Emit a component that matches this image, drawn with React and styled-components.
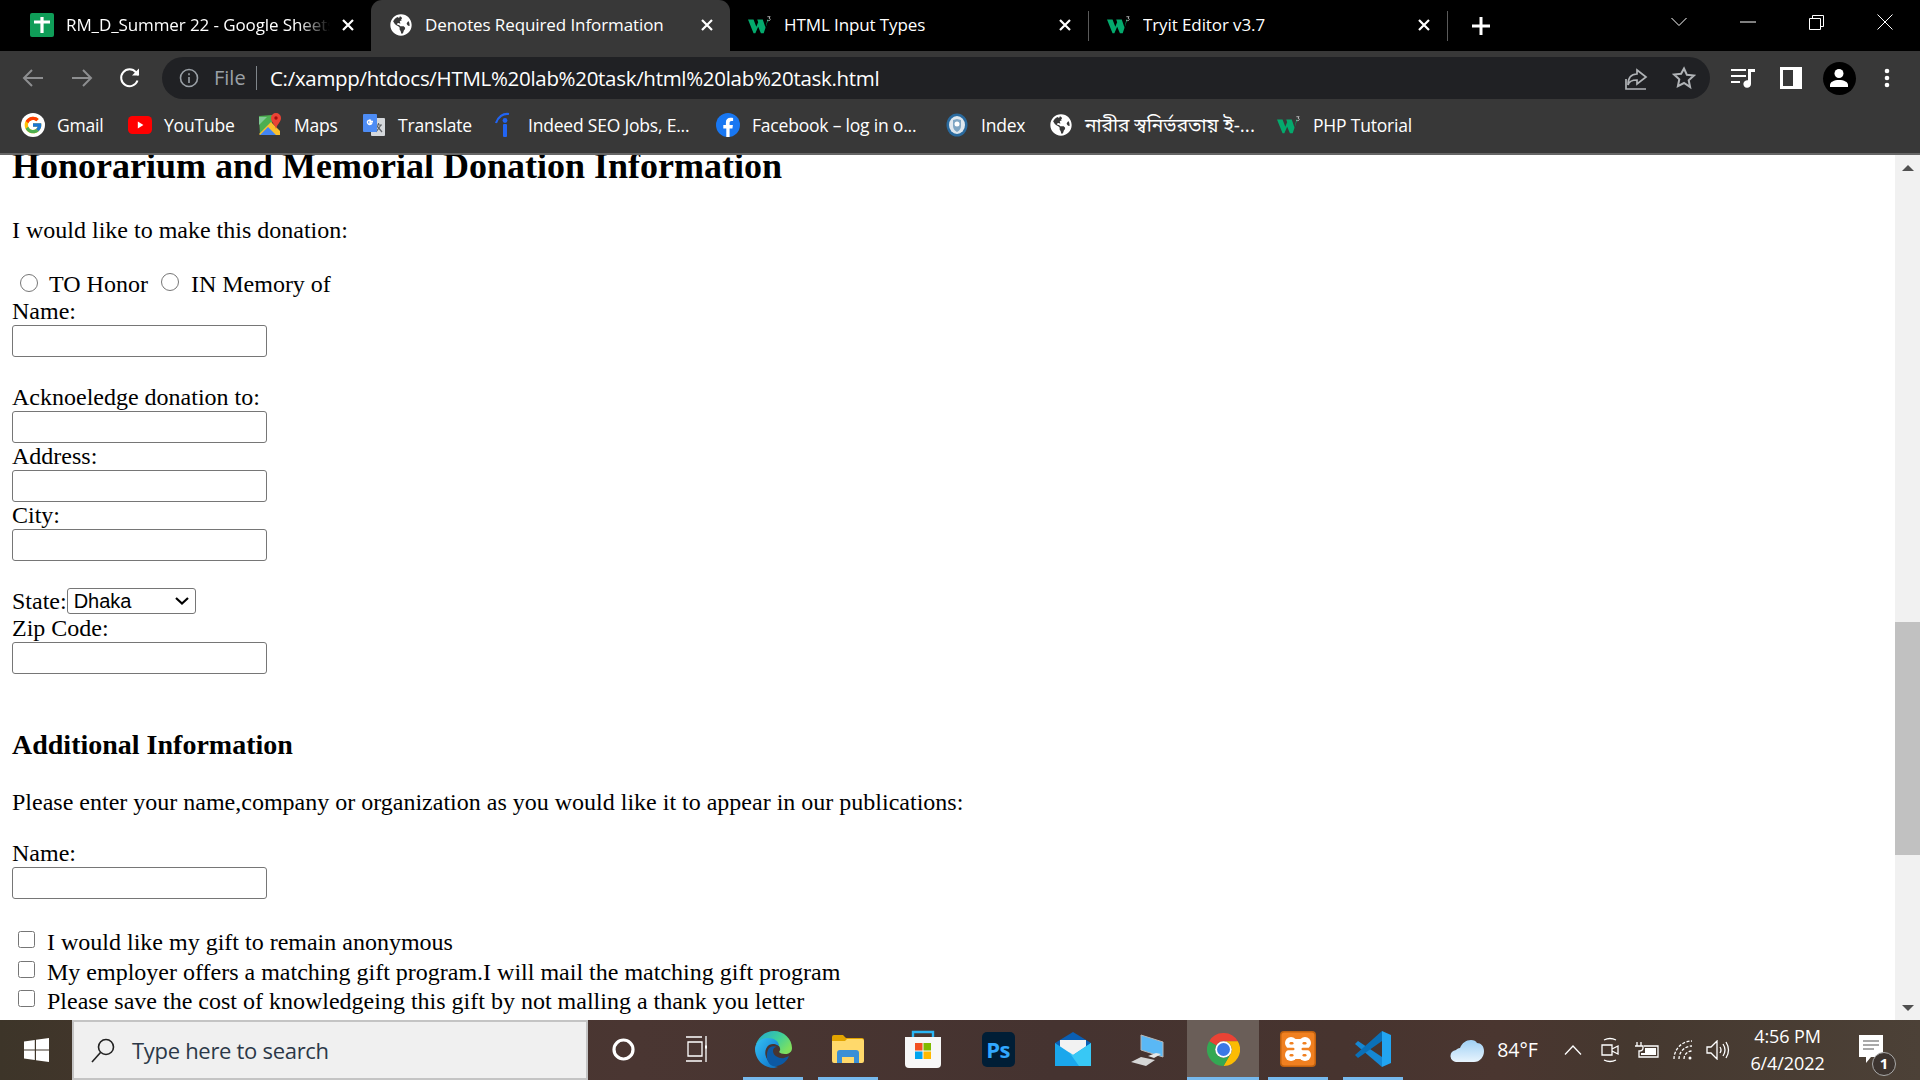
import React from "react";
import styled, { createGlobalStyle, css } from "styled-components";
import { FcGoogle } from "react-icons/fc";
import { FaGlobeAmericas } from "react-icons/fa";

const Global = createGlobalStyle`
  html, body { margin: 0; padding: 0; height: 100%; overflow: hidden; background: #fff; }
  #root { height: 100%; }
  * { box-sizing: border-box; }
`;

const UI = `"Open Sans", "Noto Sans", "Noto Sans Bengali", sans-serif`;

const Screen = styled.div`
  width: 1920px;
  height: 1080px;
  display: flex;
  flex-direction: column;
  overflow: hidden;
`;

/* ---------- browser chrome ---------- */
const TabStrip = styled.div`
  height: 51px;
  background: #000;
  display: flex;
  padding-left: 12px;
  flex: none;
`;
const Tab = styled.div`
  width: 359px;
  height: 51px;
  display: flex;
  align-items: center;
  padding: 0 ${p => p.$divider ? 18 : 17}px 2px 18px;
  color: #fff;
  font: 400 17px/22px ${UI};
  position: relative;
  ${p => p.$active && css`
    background: #383838;
    border-radius: 11px 11px 0 0;
  `}
  ${p => p.$divider && css`
    &::after {
      content: "";
      position: absolute;
      right: 0;
      top: 11px;
      height: 30px;
      width: 1px;
      background: #5a5a5a;
    }
  `}
`;
const TabFav = styled.span`
  width: 24px;
  height: 24px;
  flex: none;
  display: flex;
  align-items: center;
  justify-content: center;
  margin-right: 12px;
`;
const TabTitle = styled.span`
  flex: 1;
  white-space: nowrap;
  overflow: hidden;
  letter-spacing: -.1px;
  ${p => p.$fade && css`
    -webkit-mask-image: linear-gradient(to right, #000 88%, transparent 100%);
    mask-image: linear-gradient(to right, #000 88%, transparent 100%);
    margin-right: 12px;
  `}
`;
const TabClose = styled.svg`
  width: 12px;
  height: 12px;
  flex: none;
  stroke: #fff;
  stroke-width: 2.2;
`;
const NewTab = styled.svg`
  width: 20px;
  height: 20px;
  margin: 16px 0 0 23px;
  stroke: #fff;
  stroke-width: 3;
  flex: none;
`;
const WindowControls = styled.div`
  margin-left: auto;
  margin-right: 1px;
  display: flex;
  align-items: flex-start;
`;
const WinBtn = styled.div`
  width: 68.5px;
  height: 44px;
  display: flex;
  align-items: center;
  justify-content: center;
  svg { stroke: #fff; fill: none; stroke-width: 1; }
`;

const Toolbar = styled.div`
  height: 48px;
  background: #383838;
  display: flex;
  align-items: flex-start;
  flex: none;
  padding-top: 6px;
`;
const NavBtn = styled.div`
  width: 48.5px;
  height: 42px;
  display: flex;
  align-items: center;
  justify-content: center;
  svg { fill: none; stroke: ${p => p.$dim ? "#8d8e90" : "#fff"}; stroke-width: 2; }
`;
const NavGroup = styled.div`
  display: flex;
  padding-left: 9px;
  width: 162px;
`;
const Omnibox = styled.div`
  width: 1548px;
  height: 42px;
  background: #202124;
  border-radius: 21px;
  display: flex;
  align-items: center;
  padding: 0 14px 0 17px;
  color: #fff;
`;
const InfoIcon = styled.svg`
  width: 20px;
  height: 20px;
  fill: none;
  stroke: #9aa0a6;
  stroke-width: 1.6;
  flex: none;
`;
const Scheme = styled.span`
  font: 400 20px/24px ${UI};
  color: #9aa0a6;
  margin-left: 15px;
  width: 42px;
  flex: none;
`;
const OmniDivider = styled.span`
  width: 1px;
  height: 24px;
  background: #80868b;
  margin-right: 13px;
  flex: none;
`;
const Url = styled.span`
  font: 400 20.5px/24px ${UI};
  letter-spacing: -.3px;
  white-space: nowrap;
  flex: 1;
`;
const OmniIcon = styled.svg`
  width: 24px;
  height: 24px;
  fill: none;
  stroke: #b0b3b6;
  stroke-width: 1.7;
  margin-left: ${p => p.$gap || 0}px;
  flex: none;
`;
const ToolIcons = styled.div`
  display: flex;
  align-items: center;
  height: 42px;
  flex: 1;
  padding-left: 9px;
`;
const ToolCell = styled.div`
  width: 48px;
  height: 42px;
  display: flex;
  align-items: center;
  justify-content: center;
`;
const Avatar = styled.div`
  width: 33px;
  height: 33px;
  border-radius: 50%;
  background: #000;
  display: flex;
  align-items: center;
  justify-content: center;
`;

const BookmarkBar = styled.div`
  height: 56px;
  background: #383838;
  border-bottom: 2px solid #666;
  display: flex;
  align-items: center;
  flex: none;
  padding: 0 0 3px 21px;
`;
const Bookmark = styled.div`
  width: ${p => p.$w}px;
  display: flex;
  align-items: center;
  color: #fff;
  font: 400 17.5px/22px ${UI};
  letter-spacing: -.2px;
  white-space: nowrap;
`;
const BengaliName = styled.span`
  font-size: 19.1px;
  letter-spacing: 0;
`;
const BmIcon = styled.span`
  width: 24px;
  height: 24px;
  flex: none;
  margin-right: 12px;
  display: flex;
  align-items: center;
  justify-content: center;
`;
const GlobeWrap = styled.span`
  display: flex;
  width: 22px;
  height: 22px;
  border-radius: 50%;
`;
const GoogleWrap = styled.span`
  width: 24px;
  height: 24px;
  border-radius: 12px;
  background: #fff;
  display: flex;
  align-items: center;
  justify-content: center;
`;

/* ---------- page ---------- */
const Viewport = styled.div`
  height: 865px;
  display: flex;
  flex: none;
  overflow: hidden;
`;
const Content = styled.main`
  flex: 1;
  min-width: 0;
  background: #fff;
  color: #000;
  font: 400 24px/27px "Liberation Serif", "Times New Roman", serif;
  padding-left: 12px;
  overflow: hidden;
`;
const Title = styled.h2`
  font-size: 36px;
  line-height: 41px;
  font-weight: 700;
  margin: -9px 0 30px;
`;
const Subtitle = styled.h3`
  font-size: 28px;
  line-height: 32px;
  font-weight: 700;
  margin: 55px 0 28px;
`;
const Para = styled.p`
  margin: 0 0 ${p => p.$mb || 0}px;
`;
const RadioRow = styled.div`
  display: flex;
  align-items: center;
  height: 28px;
`;
const Radio = styled.input.attrs({ type: "radio" })`
  width: 18px;
  height: 18px;
  margin: ${p => p.$first ? "-3px 11px 0 8px" : "-4px 12px 0 13px"};
  flex: none;
`;
const Label = styled.label`
  display: block;
  margin: ${p => p.$mt || 0}px 0 3px;
  height: 24px;
  line-height: 27px;
`;
const TextInput = styled.input.attrs({ type: "text" })`
  display: block;
  width: 255px;
  height: 32px;
  margin: 0;
  padding: 1px 2px;
  background: #fff;
  border: 1px solid #767676;
  border-radius: 3px;
`;
const StateRow = styled.div`
  display: flex;
  align-items: center;
  height: 26px;
  line-height: 24px;
  margin-top: ${p => p.$mt || 0}px;
`;
const SelectWrap = styled.span`
  position: relative;
  display: block;
  width: 129px;
  height: 26px;
  svg {
    position: absolute;
    right: 7px;
    top: 9px;
    pointer-events: none;
    fill: none;
    stroke: #000;
    stroke-width: 2.2;
  }
`;
const Select = styled.select`
  appearance: none;
  display: block;
  width: 100%;
  height: 26px;
  margin: 0;
  padding: 0 0 0 6px;
  font: 400 20px "Liberation Sans", Arial, sans-serif;
  background: #fff;
  color: #000;
  border: 1px solid #767676;
  border-radius: 3px;
`;
const CheckGroup = styled.div`
  margin-top: 29px;
`;
const CheckRow = styled.div`
  display: flex;
  align-items: center;
  height: 29.5px;
  white-space: nowrap;
`;
const Check = styled.input.attrs({ type: "checkbox" })`
  width: 17px;
  height: 17px;
  margin: -6px 12px 0 6px;
  flex: none;
`;

/* ---------- scrollbar ---------- */
const ScrollBar = styled.div`
  width: 25px;
  flex: none;
  background: #f1f1f1;
  display: flex;
  flex-direction: column;
  justify-content: space-between;
  position: relative;
`;
const ArrowBtn = styled.div`
  height: 25px;
  display: flex;
  align-items: center;
  justify-content: center;
  &::before {
    content: "";
    width: 0;
    height: 0;
    border-left: 6px solid transparent;
    border-right: 6px solid transparent;
    ${p => p.$down ? "border-top: 6px solid #505050;" : "border-bottom: 6px solid #505050;"}
  }
`;
const Thumb = styled.div`
  position: absolute;
  left: 0;
  right: 0;
  top: 467px;
  height: 233px;
  background: #c1c1c1;
`;

/* ---------- taskbar ---------- */
const Taskbar = styled.footer`
  height: 60px;
  flex: none;
  display: flex;
  align-items: stretch;
  background: linear-gradient(90deg, #3d3529 0%, #44362c 8%, #4a3632 33%, #453330 55%, #47342f 70%, #4a3630 78%, #45382f 85%, #4c4137 100%);
`;
const StartBtn = styled.div`
  width: 72px;
  display: flex;
  align-items: center;
  justify-content: center;
`;
const SearchBox = styled.div`
  width: 516px;
  background: #f0f0f0;
  border: 2px solid #c4c4c4;
  display: flex;
  align-items: center;
  padding-left: 16px;
  color: #2b3848;
  font: 400 22px/26px ${UI};
  letter-spacing: -.3px;
`;
const SearchIcon = styled.svg`
  width: 26px;
  height: 26px;
  fill: none;
  stroke: #222;
  stroke-width: 1.6;
  margin-right: 16px;
  flex: none;
`;
const Slots = styled.div`
  display: flex;
  gap: 3px;
  margin-left: -1px;
`;
const Slot = styled.div`
  width: 72px;
  display: flex;
  align-items: center;
  justify-content: center;
  position: relative;
  background: ${p => p.$active ? "#6a5e58" : "transparent"};
  padding-bottom: 2px;
  ${p => (p.$running || p.$active) && css`
    &::after {
      content: "";
      position: absolute;
      bottom: 0;
      height: 3px;
      left: ${p.$active ? "0" : "6px"};
      right: ${p.$active ? "0" : "6px"};
      background: #76b9ed;
    }
  `}
`;
const PsTile = styled.div`
  width: 33px;
  height: 35px;
  border-radius: 5px;
  background: #001e36;
  color: #31a8ff;
  font: 700 22px/35px ${UI};
  text-align: center;
  letter-spacing: -.5px;
`;
const Tray = styled.div`
  flex: 1;
  display: flex;
  align-items: center;
  padding-left: 35px;
  color: #fff;
  position: relative;
`;
const TrayCell = styled.div`
  width: ${p => p.$w}px;
  margin-right: ${p => p.$mr || 0}px;
  height: 60px;
  display: flex;
  align-items: center;
  justify-content: center;
  flex: none;
  font: 400 19.5px/24px ${UI};
  svg.line { fill: none; stroke: #fff; stroke-width: 1.3; }
`;
const Clock = styled.div`
  width: 103px;
  text-align: center;
  font: 400 18px/27px ${UI};
  color: #fff;
  flex: none;
  letter-spacing: -.1px;
`;
const Badge = styled.span`
  position: absolute;
  right: 9px;
  bottom: 4px;
  width: 24px;
  height: 24px;
  border-radius: 50%;
  border: 1.5px solid #aaa;
  background: #3d342f;
  color: #fff;
  font: 700 15px/21px ${UI};
  text-align: center;
`;
const NotifyCell = styled.div`
  width: 66px;
  height: 60px;
  position: relative;
  display: flex;
  align-items: center;
  justify-content: center;
  flex: none;
`;

/* ---------- logos ---------- */
const X = () => (
  <TabClose viewBox="0 0 12 12"><path d="M1 1l10 10M11 1L1 11" /></TabClose>
);
const Sheets = () => (
  <svg width="24" height="24" viewBox="0 0 24 24">
    <rect width="24" height="24" rx="2" fill="#0f9d58" />
    <path d="M4 9h16M12 4v16" stroke="#fff" strokeWidth="3.2" fill="none" />
  </svg>
);
const W3 = () => (
  <svg width="26" height="22" viewBox="0 0 26 22">
    <path d="M0 5h6l3 8 2-5-1-3h6l3 9 2-9h1l-5 15h-3l-3-7-3 7H6z" fill="#04aa6d" />
    <path d="M21 2h3l-1.300 1.600c1 .2 1.400.7 1.400 1.300 0 .9-.8 1.400-1.800 1.400-.6 0-1-.1-1.300-.3" stroke="#ddd" strokeWidth=".8" fill="none" />
  </svg>
);
const Globe = () => (
  <GlobeWrap><FaGlobeAmericas size={22} color="#fff" /></GlobeWrap>
);
const Google = () => (
  <GoogleWrap><FcGoogle size={20} /></GoogleWrap>
);
const YouTube = () => (
  <svg width="24" height="18" viewBox="0 0 24 18">
    <rect width="24" height="18" rx="4.500" fill="#f00" />
    <path d="M9.800 5.600v6.800L15.400 9z" fill="#fff" />
  </svg>
);
const Maps = () => (
  <svg width="24" height="24" viewBox="0 0 24 24">
    <path d="M1 3l13-1v20H2z" fill="#4caf50" />
    <path d="M1 21L13 9l9 9v4H2z" fill="#fbc02d" />
    <path d="M2 22l8-8 8 8z" fill="#4285f4" />
    <path d="M1 4h8l-8 8z" fill="#81c995" />
    <path d="M18 0a5 5 0 0 1 5 5c0 4-4 6-5 11-1-5-5-7-5-11a5 5 0 0 1 5-5z" fill="#ea4335" />
    <circle cx="18" cy="5" r="1.700" fill="#a50e0e" />
  </svg>
);
const Translate = () => (
  <svg width="24" height="24" viewBox="0 0 24 24">
    <rect x="9" y="5" width="14" height="18" rx="1" fill="#d5d8dc" />
    <path d="M13 12h7M16.500 10v2M14 19l5-7M15 13l5 6" stroke="#5f6368" strokeWidth="1.200" fill="none" />
    <rect x="1" y="1" width="14" height="18" rx="1" fill="#4d8cf5" />
    <path d="M11 8.500H8v1.800h1.600A2.200 2.200 0 1 1 9 7.500" stroke="#fff" strokeWidth="1.400" fill="none" />
  </svg>
);
const Indeed = () => (
  <svg width="22" height="26" viewBox="0 0 22 26">
    <path d="M3 11C5 5 10 1 16 2" stroke="#2164f3" strokeWidth="2.200" fill="none" />
    <circle cx="12" cy="8.500" r="2.400" fill="#2164f3" />
    <rect x="10" y="12" width="4" height="13" rx="1" fill="#2164f3" />
  </svg>
);
const Facebook = () => (
  <svg width="24" height="24" viewBox="0 0 24 24">
    <circle cx="12" cy="12" r="12" fill="#1877f2" />
    <path d="M16.400 15.400l.5-3.400h-3.300V9.800c0-1 .5-1.900 2-1.900h1.500V5c0 0-1.400-.2-2.700-.2-2.700 0-4.500 1.600-4.500 4.600V12H7.300v3.400h3V24h3.300v-8.600z" fill="#fff" />
  </svg>
);
const IndexLogo = () => (
  <svg width="22" height="24" viewBox="0 0 22 24">
    <ellipse cx="11" cy="12" rx="10.500" ry="11.500" fill="#2a6a9e" />
    <ellipse cx="11" cy="12" rx="8" ry="9" fill="#dfe7ee" />
    <path d="M7 7l4-1 4 1v6c0 3-2 5-4 6-2-1-4-3-4-6z" fill="#7fa6c4" />
    <circle cx="11" cy="11" r="2.500" fill="#fff" />
  </svg>
);
const WinLogo = () => (
  <svg width="25" height="24" viewBox="0 0 25 24" fill="#fff">
    <path d="M0 3.400l10.800-1.500v9.500H0zM12 1.700L25 0v11.400H12zM0 12.600h10.800v9.500L0 20.600zM12 12.600h13V24l-13-1.800z" />
  </svg>
);
const EdgeLogo = () => (
  <svg width="37" height="37" viewBox="0 0 37 37">
    <defs>
      <linearGradient id="eg" x1="0" y1="0" x2="1" y2="1">
        <stop offset="0" stopColor="#35c1f1" />
        <stop offset=".6" stopColor="#1b8fdc" />
        <stop offset="1" stopColor="#0c6bb8" />
      </linearGradient>
      <linearGradient id="eg2" x1="0" y1="0" x2="1" y2=".6">
        <stop offset="0" stopColor="#1fa6d8" />
        <stop offset=".6" stopColor="#3fcf9a" />
        <stop offset="1" stopColor="#7ee05f" />
      </linearGradient>
    </defs>
    <path d="M1 13C4 5 11 0 19 0c10 0 18 8 18 17 0 4-3 6-7 6-3 0-5-1-6-2 1-1 2-3 0-6-3-4-10-5-15-2-4 2-8 0-8 0z" fill="url(#eg2)" />
    <path d="M0 18C0 12 6 7 13 7c6 0 11 3 11 8 0 0-5-4-10-1-4 3-5 9-2 14 2 4 6 7 11 8l-4 1C8 37 0 28 0 18z" fill="url(#eg)" />
    <path d="M13 19c1-3 5-5 9-3-3 0-4 2-4 4 0 5 7 8 11 7l5-2c-3 8-11 11-16 10-7-2-7-12-5-16z" fill="#0c59a4" />
  </svg>
);
const Explorer = () => (
  <svg width="32" height="28" viewBox="0 0 32 28">
    <path d="M0 2a2 2 0 0 1 2-2h9l3 3h16a2 2 0 0 1 2 2v3H0z" fill="#e2a400" />
    <path d="M0 6h13l2-2h15a2 2 0 0 1 2 2v20a2 2 0 0 1-2 2H2a2 2 0 0 1-2-2z" fill="#ffd96b" />
    <path d="M5 28V18a3 3 0 0 1 3-3h16a3 3 0 0 1 3 3v10h-5v-6H10v6z" fill="#3a8fd6" />
  </svg>
);
const Store = () => (
  <svg width="36" height="38" viewBox="0 0 36 38">
    <path d="M8 8V2h20v6" fill="none" stroke="#29b6f6" strokeWidth="2.400" />
    <path d="M0 7h36v27a4 4 0 0 1-4 4H4a4 4 0 0 1-4-4z" fill="#f7f7f7" />
    <rect x="10" y="13" width="7.500" height="7.500" fill="#f25022" />
    <rect x="18.500" y="13" width="7.500" height="7.500" fill="#7fba00" />
    <rect x="10" y="21.500" width="7.500" height="7.500" fill="#00a4ef" />
    <rect x="18.500" y="21.500" width="7.500" height="7.500" fill="#ffb900" />
  </svg>
);
const Mail = () => (
  <svg width="36" height="34" viewBox="0 0 36 34">
    <path d="M0 11L18 0l18 11v6H0z" fill="#0a5fb4" />
    <path d="M5 8h26v10L18 24 5 18z" fill="#f2f2f2" />
    <path d="M0 11l18 12 18-12v23H0z" fill="#1aa7ec" />
    <path d="M36 11v23H24L14 20l4 3z" fill="#38c8f5" />
  </svg>
);
const Laptop = () => (
  <svg width="34" height="34" viewBox="0 0 34 34">
    <path d="M10 3l22 7v15L10 18z" fill="#5ab8f5" stroke="#b6b6b6" />
    <path d="M0 30l10-5 14 3-9 6z" fill="#d6d6d6" />
    <path d="M17 24l8-3 5 1-7 4z" fill="#e6e6e6" />
  </svg>
);
const ChromeLogo = () => (
  <svg width="33" height="33" viewBox="0 0 32 32">
    <path d="M2.140 8A16 16 0 0 1 29.860 8H16a8 8 0 0 0-6.930 4z" fill="#ea4335" />
    <path d="M29.860 8A16 16 0 0 1 16 32l6.930-12A8 8 0 0 0 16 8z" fill="#fbbc04" />
    <path d="M16 32A16 16 0 0 1 2.140 8l6.930 4a8 8 0 0 0 13.860 8z" fill="#34a853" />
    <circle cx="16" cy="16" r="8" fill="#fff" />
    <circle cx="16" cy="16" r="6.300" fill="#3b78e7" />
  </svg>
);
const Xampp = () => (
  <svg width="36" height="36" viewBox="0 0 36 36">
    <rect width="36" height="36" rx="4" fill="#c2620f" />
    <rect x="1.500" y="1.500" width="33" height="33" rx="3" fill="#f08020" />
    <g fill="#fff">
      <circle cx="11" cy="12" r="6" />
      <circle cx="25" cy="12" r="6" />
      <circle cx="11" cy="24" r="6" />
      <circle cx="25" cy="24" r="6" />
      <rect x="11" y="8" width="14" height="20" />
    </g>
    <g fill="#f08020">
      <rect x="5" y="16.700" width="9.500" height="2.600" rx="1.300" />
      <rect x="21.500" y="16.700" width="9.500" height="2.600" rx="1.300" />
      <rect x="9.500" y="11" width="4" height="2.600" rx="1.300" />
      <rect x="22.500" y="11" width="4" height="2.600" rx="1.300" />
      <rect x="9.500" y="23" width="4" height="2.600" rx="1.300" />
      <rect x="22.500" y="23" width="4" height="2.600" rx="1.300" />
    </g>
  </svg>
);
const VsCode = () => (
  <svg width="36" height="36" viewBox="0 0 36 36">
    <path d="M27 36L0 13l3-3 24 16z" fill="#1587d3" />
    <path d="M27 0L0 24l3 3 24-17z" fill="#0a70b8" />
    <path d="M27 0l9 4v28l-9 4z" fill="#22a5f1" />
  </svg>
);
const Cloud = () => (
  <svg width="34" height="24" viewBox="0 0 34 24">
    <defs>
      <linearGradient id="cl" x1="0" y1="0" x2="0" y2="1">
        <stop offset="0" stopColor="#9fd0f5" />
        <stop offset="1" stopColor="#e8f4fd" />
      </linearGradient>
    </defs>
    <path d="M7 24a6 6 0 0 1-1-12c1-1 2-2 4-2 2-5 6-8 11-8 3 0 5 1 6 3 4 0 7 3 7 8 0 6-4 11-10 11z" fill="url(#cl)" />
  </svg>
);

const fields = [
  { label: "Acknoeledge donation to:", mt: 27 },
  { label: "Address:", mt: 0 },
  { label: "City:", mt: 0 },
];

export default function App() {
  return (
    <Screen>
      <Global />
      <TabStrip>
        <Tab>
          <TabFav><Sheets /></TabFav>
          <TabTitle $fade>RM_D_Summer 22 - Google Sheets</TabTitle>
          <X />
        </Tab>
        <Tab $active>
          <TabFav><Globe /></TabFav>
          <TabTitle>Denotes Required Information</TabTitle>
          <X />
        </Tab>
        <Tab $divider>
          <TabFav><W3 /></TabFav>
          <TabTitle>HTML Input Types</TabTitle>
          <X />
        </Tab>
        <Tab $divider>
          <TabFav><W3 /></TabFav>
          <TabTitle>Tryit Editor v3.7</TabTitle>
          <X />
        </Tab>
        <NewTab viewBox="0 0 20 20"><path d="M10 1v18M1 10h18" /></NewTab>
        <WindowControls>
          <WinBtn><svg width="16" height="10" viewBox="0 0 16 10"><path d="M.5 1L8 8.500 15.500 1" /></svg></WinBtn>
          <WinBtn><svg width="16" height="2" viewBox="0 0 16 2"><path d="M0 1h16" /></svg></WinBtn>
          <WinBtn><svg width="15" height="15" viewBox="0 0 15 15"><path d="M.5 3.500h11v11H.5zM3.500 3.500v-3h11v11h-3" /></svg></WinBtn>
          <WinBtn><svg width="16" height="16" viewBox="0 0 16 16"><path d="M.5.500l15 15M15.500.500l-15 15" /></svg></WinBtn>
        </WindowControls>
      </TabStrip>

      <Toolbar>
        <NavGroup>
          <NavBtn $dim><svg width="22" height="20" viewBox="0 0 22 20"><path d="M21 10H2M10 2l-8 8 8 8" /></svg></NavBtn>
          <NavBtn $dim><svg width="22" height="20" viewBox="0 0 22 20"><path d="M1 10h19M12 2l8 8-8 8" /></svg></NavBtn>
          <NavBtn><svg width="22" height="22" viewBox="0 0 22 22"><path d="M18.500 13.500A8.400 8.400 0 1 1 17 5.300L19.500 8" /><path d="M20 1.500V8.500h-7" fill="#fff" stroke="none" /></svg></NavBtn>
        </NavGroup>
        <Omnibox>
          <InfoIcon viewBox="0 0 20 20"><circle cx="10" cy="10" r="8.500" /><path d="M10 9v6M10 5.200v2" /></InfoIcon>
          <Scheme>File</Scheme>
          <OmniDivider />
          <Url>C:/xampp/htdocs/HTML%20lab%20task/html%20lab%20task.html</Url>
          <OmniIcon viewBox="0 0 24 24"><path d="M2 13v10h20M13 4l9 7-9 7v-4c-5 0-8 1-9 5 0-7 3-11 9-11z" /></OmniIcon>
          <OmniIcon $gap={24} viewBox="0 0 24 24"><path d="M12 2.500l2.900 6.300 6.900.8-5.100 4.700 1.400 6.800L12 17l-6.100 3.100 1.400-6.800-5.100-4.700 6.900-.8z" strokeWidth="2" /></OmniIcon>
        </Omnibox>
        <ToolIcons>
          <ToolCell>
            <svg width="24" height="20" viewBox="0 0 24 20" fill="#fff">
              <path d="M0 1h15v2H0zM0 7h15v2H0zM0 13h9v2H0z" />
              <path d="M17 1h7v3h-4v12a3.800 3.800 0 1 1-3-3.700z" />
            </svg>
          </ToolCell>
          <ToolCell>
            <svg width="22" height="22" viewBox="0 0 22 22">
              <path d="M0 0h22v22H0z" fill="#fff" />
              <path d="M3 3h10v16H3z" fill="#383838" />
            </svg>
          </ToolCell>
          <ToolCell>
            <Avatar>
              <svg width="20" height="20" viewBox="0 0 20 20" fill="#fff">
                <circle cx="10" cy="5.500" r="4.500" />
                <path d="M1 19v-2c0-3 4-5 9-5s9 2 9 5v2z" />
              </svg>
            </Avatar>
          </ToolCell>
          <ToolCell>
            <svg width="6" height="20" viewBox="0 0 6 20" fill="#fff">
              <circle cx="3" cy="3" r="2.300" /><circle cx="3" cy="10" r="2.300" /><circle cx="3" cy="17" r="2.300" />
            </svg>
          </ToolCell>
        </ToolIcons>
      </Toolbar>

      <BookmarkBar>
        <Bookmark $w={107}><BmIcon><Google /></BmIcon>Gmail</Bookmark>
        <Bookmark $w={130}><BmIcon><YouTube /></BmIcon>YouTube</Bookmark>
        <Bookmark $w={104}><BmIcon><Maps /></BmIcon>Maps</Bookmark>
        <Bookmark $w={130}><BmIcon><Translate /></BmIcon>Translate</Bookmark>
        <Bookmark $w={224}><BmIcon><Indeed /></BmIcon>Indeed SEO Jobs, E...</Bookmark>
        <Bookmark $w={229}><BmIcon><Facebook /></BmIcon>Facebook – log in o...</Bookmark>
        <Bookmark $w={104}><BmIcon><IndexLogo /></BmIcon>Index</Bookmark>
        <Bookmark $w={228}><BmIcon><Globe /></BmIcon><BengaliName>নারীর স্বনির্ভরতায় ই-...</BengaliName></Bookmark>
        <Bookmark $w={140}><BmIcon><W3 /></BmIcon>PHP Tutorial</Bookmark>
      </BookmarkBar>

      <Viewport>
        <Content>
          <Title>Honorarium and Memorial Donation Information</Title>
          <Para $mb={26}>I would like to make this donation:</Para>
          <RadioRow>
            <Radio name="kind" $first />TO Honor
            <Radio name="kind" />IN Memory of
          </RadioRow>
          <Label>Name:</Label>
          <TextInput />
          {fields.map(f => (
            <React.Fragment key={f.label}>
              <Label $mt={f.mt}>{f.label}</Label>
              <TextInput />
            </React.Fragment>
          ))}
          <StateRow $mt={27}>
            State:
            <SelectWrap>
              <Select defaultValue="Dhaka"><option>Dhaka</option></Select>
              <svg width="14" height="8" viewBox="0 0 14 8"><path d="M1 1l6 5.500L13 1" /></svg>
            </SelectWrap>
          </StateRow>
          <Label $mt={1}>Zip Code:</Label>
          <TextInput />
          <Subtitle>Additional Information</Subtitle>
          <Para $mb={24}>Please enter your name,company or organization as you would like it to appear in our publications:</Para>
          <Label>Name:</Label>
          <TextInput />
          <CheckGroup>
            <CheckRow><Check />I would like my gift to remain anonymous</CheckRow>
            <CheckRow><Check />My employer offers a matching gift program.I will mail the matching gift program</CheckRow>
            <CheckRow><Check />Please save the cost of knowledgeing this gift by not malling a thank you letter</CheckRow>
          </CheckGroup>
        </Content>
        <ScrollBar>
          <ArrowBtn />
          <Thumb />
          <ArrowBtn $down />
        </ScrollBar>
      </Viewport>

      <Taskbar>
        <StartBtn><WinLogo /></StartBtn>
        <SearchBox>
          <SearchIcon viewBox="0 0 26 26"><circle cx="16" cy="10" r="7.500" /><path d="M10.500 15.500L2 25" /></SearchIcon>
          Type here to search
        </SearchBox>
        <Slots>
          <Slot>
            <svg width="25" height="25" viewBox="0 0 25 25" fill="none" stroke="#fff" strokeWidth="3.200"><circle cx="12.500" cy="12.500" r="9.500" /></svg>
          </Slot>
          <Slot>
            <svg width="24" height="26" viewBox="0 0 24 26" fill="none" stroke="#fff" strokeWidth="1.300"><path d="M0 1h16M0 25h16M2 6h14v14H2zM20 0v26" /><path d="M19 11h2" strokeWidth="3" /></svg>
          </Slot>
          <Slot $running><EdgeLogo /></Slot>
          <Slot $running><Explorer /></Slot>
          <Slot><Store /></Slot>
          <Slot><PsTile>Ps</PsTile></Slot>
          <Slot><Mail /></Slot>
          <Slot><Laptop /></Slot>
          <Slot $active><ChromeLogo /></Slot>
          <Slot $running><Xampp /></Slot>
          <Slot $running><VsCode /></Slot>
        </Slots>
        <Tray>
          <TrayCell $w={46}><Cloud /></TrayCell>
          <TrayCell $w={55} $mr={9}>84°F</TrayCell>
          <TrayCell $w={38}><svg className="line" width="18" height="10" viewBox="0 0 18 10"><path d="M1 9.500L9 1l8 8.500" /></svg></TrayCell>
          <TrayCell $w={36}><svg className="line" width="18" height="26" viewBox="0 0 18 26"><path d="M3 3q6-3 12 0M3 23q6 3 12 0M1 8h10v10H1zM11 12l6-3v8l-6-3" /></svg></TrayCell>
          <TrayCell $w={37}><svg className="line" width="24" height="16" viewBox="0 0 24 16"><path d="M2 0v4M6 0v4M0 4h8v2q0 3-4 3v3M9 4h14v11H4v-3" /><path d="M10 6h11v7H6v-2h4z" fill="#fff" stroke="none" /></svg></TrayCell>
          <TrayCell $w={35}><svg className="line" width="20" height="20" viewBox="0 0 20 20"><path d="M1 19A18 18 0 0 1 19 1M6 19A13 13 0 0 1 19 6M11 19a8 8 0 0 1 8-8" strokeDasharray="3 1.500" /><circle cx="17" cy="18" r="1.500" fill="#fff" stroke="none" /></svg></TrayCell>
          <TrayCell $w={36}><svg className="line" width="24" height="20" viewBox="0 0 24 20"><path d="M1 7h4l6-6v18l-6-6H1zM14 7q2 3 0 6M17 4q4 6 0 12M20 2q5 8 0 16" /></svg></TrayCell>
          <Clock>4:56 PM<br />6/4/2022</Clock>
          <NotifyCell>
            <svg width="26" height="30" viewBox="0 0 26 30" fill="#fff"><path d="M0 0h24v22H12l-5 6v-6H0z" /><path d="M4 6h16M4 10h16M4 14h11" stroke="#555" strokeWidth="1.200" /></svg>
            <Badge>1</Badge>
          </NotifyCell>
        </Tray>
      </Taskbar>
    </Screen>
  );
}
